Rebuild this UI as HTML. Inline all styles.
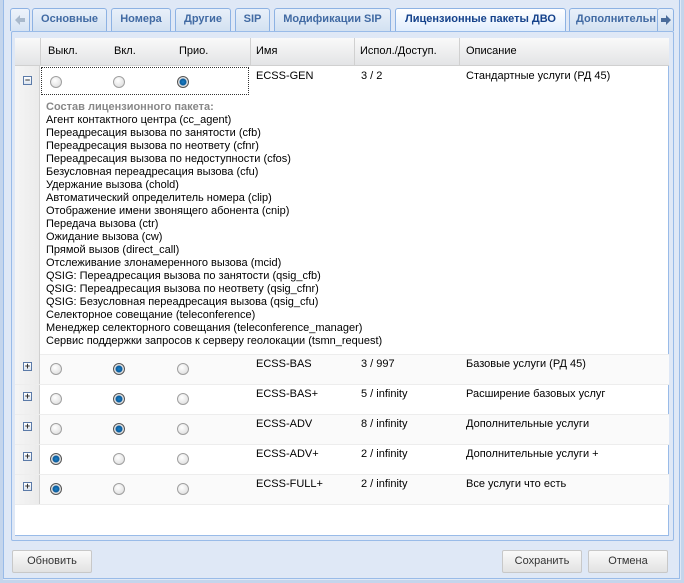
<!DOCTYPE html>
<html><head><meta charset="utf-8"><style>
*{box-sizing:border-box;margin:0;padding:0}
body{width:684px;height:583px;overflow:hidden;background:#fff;font-family:"Liberation Sans",sans-serif;font-size:11px;color:#000;position:relative}
.frame{position:absolute;left:0;top:0;width:684px;height:583px;background:#dfe8f6;border:3px solid #c4d5ec;border-top:0}
.frame2{position:absolute;left:3px;top:0;width:677px;height:579px;border:1px solid #99bbe8;border-top:0;background:#dfe8f6}
.tab{position:absolute;top:8px;height:23px;border:1px solid #8db2e3;border-bottom:0;border-radius:3px 3px 0 0;background:linear-gradient(#e9f0fa,#d3e1f1);color:#416aa3;font-weight:bold;font-size:11px;line-height:21px;text-align:center;white-space:nowrap;overflow:hidden}
.tab.act{background:linear-gradient(#fff,#deecfd);color:#15428b;height:25px}
.tab svg{position:absolute;left:50%;top:50%;margin:-5px 0 0 -5px}
.panel{position:absolute;left:11px;top:31px;width:663px;height:510px;border:1px solid #99bbe8;background:#dfe8f6;border-radius:2px}
.grid{position:absolute;left:15px;top:38px;width:654px;height:498px;background:#fff;border:1px solid #99bbe8;border-top:0;border-left:0}
.hdr{position:absolute;left:15px;top:38px;width:654px;height:28px;background:linear-gradient(#f9f9f9,#e3e4e6);border-bottom:1px solid #d0d0d0}
.hdr span{position:absolute;top:7px;color:#000}
.vs{position:absolute;top:38px;width:1px;height:28px;background:#d0d0d0}
.rn{position:absolute;left:15px;width:25px;background:linear-gradient(90deg,#f5f5f5,#ebebeb);border-right:1px solid #d0d0d0}
.row{position:absolute;left:15px;width:654px;height:30px;border-bottom:1px solid #ededed}
.t{position:absolute}
.r{position:absolute;width:12px;height:12px;border-radius:50%;border:1px solid #a0a0a0;background:radial-gradient(circle at 40% 35%,#fff,#d8d8d8)}
.r.on{border-color:#555;background:radial-gradient(circle at 50% 50%,#1a80c8 0,#0a5a9a 3px,#e8e8e8 4px,#ccc 6px)}
.ex{position:absolute;left:23px;width:9px;height:9px;border:1px solid #5b7aa8;background:linear-gradient(#fff,#dbe4f0);font-size:9px;line-height:7px;text-align:center;color:#333;font-weight:bold}
.btn{position:absolute;top:550px;height:23px;border:1px solid #c8c8c8;border-radius:2px;background:linear-gradient(#fafafa,#e2e2e2);text-align:center;line-height:21px;color:#333}
.lst{position:absolute;left:46px;top:101px;line-height:13px;font-size:11px}
</style></head><body>
<div class="frame"></div><div class="frame2"></div>
<div class="tab" style="left:10px;width:20px;background:linear-gradient(#eef3fb,#d6e3f3)"><svg width="10" height="10" viewBox="0 0 10 10"><path d="M0 5L5 0V3H10V7H5V10Z" fill="#a9b9cc"/></svg></div>
<div class="tab" style="left:32px;width:75px">Основные</div>
<div class="tab" style="left:111px;width:60px">Номера</div>
<div class="tab" style="left:175px;width:56px">Другие</div>
<div class="tab" style="left:235px;width:35px">SIP</div>
<div class="tab" style="left:274px;width:117px">Модификации SIP</div>
<div class="tab act" style="left:395px;width:171px">Лицензионные пакеты ДВО</div>
<div class="tab" style="left:569px;width:90px;text-align:left;padding-left:6px">Дополнительн</div>
<div class="tab" style="left:657px;width:17px"><svg width="10" height="10" viewBox="0 0 10 10"><path d="M10 5L5 0V3H0V7H5V10Z" fill="#4a6c9b"/></svg></div>
<div class="panel"></div>
<div class="grid"></div>
<div class="hdr"><span style="left:33px">Выкл.</span><span style="left:99px">Вкл.</span><span style="left:164px">Прио.</span><span style="left:241px">Имя</span><span style="left:345px">Испол./Доступ.</span><span style="left:451px">Описание</span></div>
<div class="vs" style="left:40px"></div><div class="vs" style="left:250px"></div><div class="vs" style="left:354px"></div><div class="vs" style="left:459px"></div>
<div class="row" style="top:66px;height:289px"></div>
<div class="rn" style="top:66px;height:289px"></div>
<div style="position:absolute;left:41px;top:67px;width:208px;height:28px;border:1px dotted #333"></div>
<div class="ex" style="top:76px">−</div>
<div class="r" style="left:50px;top:76px"></div><div class="r" style="left:113px;top:76px"></div><div class="r on" style="left:177px;top:76px"></div>
<div class="t" style="left:256px;top:70px">ECSS-GEN</div><div class="t" style="left:361px;top:70px">3 / 2</div><div class="t" style="left:466px;top:70px">Стандартные услуги (РД 45)</div>
<div class="lst"><b style="color:#888">Состав лицензионного пакета:</b><br>Агент контактного центра (cc_agent)<br>Переадресация вызова по занятости (cfb)<br>Переадресация вызова по неответу (cfnr)<br>Переадресация вызова по недоступности (cfos)<br>Безусловная переадресация вызова (cfu)<br>Удержание вызова (chold)<br>Автоматический определитель номера (clip)<br>Отображение имени звонящего абонента (cnip)<br>Передача вызова (ctr)<br>Ожидание вызова (cw)<br>Прямой вызов (direct_call)<br>Отслеживание злонамеренного вызова (mcid)<br>QSIG: Переадресация вызова по занятости (qsig_cfb)<br>QSIG: Переадресация вызова по неответу (qsig_cfnr)<br>QSIG: Безусловная переадресация вызова (qsig_cfu)<br>Селекторное совещание (teleconference)<br>Менеджер селекторного совещания (teleconference_manager)<br>Сервис поддержки запросов к серверу геолокации (tsmn_request)</div>

<div class="row" style="top:355px;background:#fafafa"></div><div class="rn" style="top:355px;height:29px"></div>
<div class="ex" style="top:362px">+</div>
<div class="r" style="left:50px;top:363px"></div><div class="r on" style="left:113px;top:363px"></div><div class="r" style="left:177px;top:363px"></div>
<div class="t" style="left:256px;top:358px">ECSS-BAS</div><div class="t" style="left:361px;top:358px">3 / 997</div><div class="t" style="left:466px;top:358px">Базовые услуги (РД 45)</div>

<div class="row" style="top:385px"></div><div class="rn" style="top:385px;height:29px"></div>
<div class="ex" style="top:392px">+</div>
<div class="r" style="left:50px;top:393px"></div><div class="r on" style="left:113px;top:393px"></div><div class="r" style="left:177px;top:393px"></div>
<div class="t" style="left:256px;top:388px">ECSS-BAS+</div><div class="t" style="left:361px;top:388px">5 / infinity</div><div class="t" style="left:466px;top:388px">Расширение базовых услуг</div>

<div class="row" style="top:415px;background:#fafafa"></div><div class="rn" style="top:415px;height:29px"></div>
<div class="ex" style="top:422px">+</div>
<div class="r" style="left:50px;top:423px"></div><div class="r on" style="left:113px;top:423px"></div><div class="r" style="left:177px;top:423px"></div>
<div class="t" style="left:256px;top:418px">ECSS-ADV</div><div class="t" style="left:361px;top:418px">8 / infinity</div><div class="t" style="left:466px;top:418px">Дополнительные услуги</div>

<div class="row" style="top:445px"></div><div class="rn" style="top:445px;height:29px"></div>
<div class="ex" style="top:452px">+</div>
<div class="r on" style="left:50px;top:453px"></div><div class="r" style="left:113px;top:453px"></div><div class="r" style="left:177px;top:453px"></div>
<div class="t" style="left:256px;top:448px">ECSS-ADV+</div><div class="t" style="left:361px;top:448px">2 / infinity</div><div class="t" style="left:466px;top:448px">Дополнительные услуги +</div>

<div class="row" style="top:475px;background:#fafafa"></div><div class="rn" style="top:475px;height:29px"></div>
<div class="ex" style="top:482px">+</div>
<div class="r on" style="left:50px;top:483px"></div><div class="r" style="left:113px;top:483px"></div><div class="r" style="left:177px;top:483px"></div>
<div class="t" style="left:256px;top:478px">ECSS-FULL+</div><div class="t" style="left:361px;top:478px">2 / infinity</div><div class="t" style="left:466px;top:478px">Все услуги что есть</div>

<div class="btn" style="left:12px;width:80px">Обновить</div>
<div class="btn" style="left:502px;width:80px">Сохранить</div>
<div class="btn" style="left:588px;width:80px">Отмена</div>
</body></html>
